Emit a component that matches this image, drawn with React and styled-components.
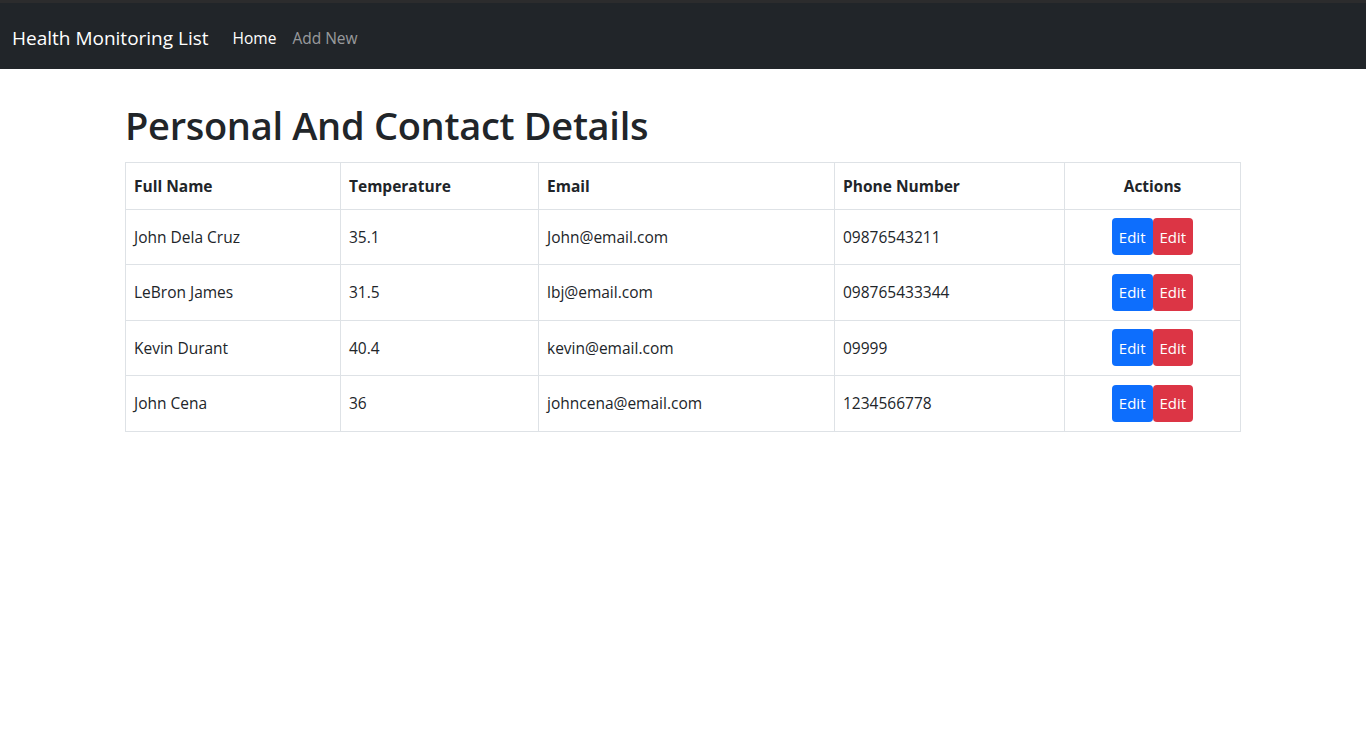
import React from "react";
import styled, { createGlobalStyle } from "styled-components";

const GlobalStyle = createGlobalStyle`
  body {
    margin: 0;
    font-family: "Open Sans", "Noto Sans", sans-serif;
    color: #212529;
    background: #fff;
  }
`;

const TopStrip = styled.div`
  height: 3px;
  background: #2c2c2d;
`;

const Navbar = styled.nav`
  height: 66px;
  background: #212529;
  display: flex;
  align-items: center;
  padding: 3px 12px 0;
  box-sizing: border-box;
`;

const Brand = styled.a`
  color: #fff;
  font-size: 19px;
  margin-right: 16px;
  text-decoration: none;
`;

const NavLink = styled.a`
  color: ${(p) => (p.active ? "#fff" : "rgba(255,255,255,.55)")};
  font-size: 15.5px;
  padding: 0 8px;
  text-decoration: none;
`;

const Container = styled.main`
  max-width: 1116px;
  margin: 0 auto;
  padding-top: 33px;
`;

const Title = styled.h1`
  font-size: 38px;
  font-weight: 600;
  line-height: 1.25;
  letter-spacing: -0.3px;
  margin: 0 0 12px;
`;

const Table = styled.table`
  width: 100%;
  border-collapse: collapse;
  font-size: 15.5px;

  th,
  td {
    border: 1px solid #dee2e6;
    padding: 0 8px;
    text-align: left;
    vertical-align: middle;
  }

  th {
    height: 46px;
    font-weight: 700;
    font-size: 15.5px;
  }

  td {
    height: 54.5px;
  }

  .center {
    text-align: center;
  }
`;

const Btn = styled.button`
  height: 37px;
  padding: 0 7px;
  border: none;
  border-radius: 4px;
  color: #fff;
  font-family: inherit;
  font-size: 15px;
  background: ${(p) => (p.danger ? "#dc3545" : "#0d6efd")};
  vertical-align: middle;
`;

const people = [
  ["John Dela Cruz", "35.1", "John@email.com", "09876543211"],
  ["LeBron James", "31.5", "lbj@email.com", "098765433344"],
  ["Kevin Durant", "40.4", "kevin@email.com", "09999"],
  ["John Cena", "36", "johncena@email.com", "1234566778"],
];

const widths = [215, 198, 296, 230, 176];

export default function App() {
  return (
    <>
      <GlobalStyle />
      <TopStrip />
      <Navbar>
        <Brand href="#">Health Monitoring List</Brand>
        <NavLink href="#" active>
          Home
        </NavLink>
        <NavLink href="#">Add New</NavLink>
      </Navbar>
      <Container>
        <Title>Personal And Contact Details</Title>
        <Table>
          <colgroup>
            {widths.map((w, i) => (
              <col key={i} style={{ width: w }} />
            ))}
          </colgroup>
          <thead>
            <tr>
              <th>Full Name</th>
              <th>Temperature</th>
              <th>Email</th>
              <th>Phone Number</th>
              <th className="center">Actions</th>
            </tr>
          </thead>
          <tbody>
            {people.map((p) => (
              <tr key={p[2]}>
                <td>{p[0]}</td>
                <td>{p[1]}</td>
                <td>{p[2]}</td>
                <td>{p[3]}</td>
                <td className="center">
                  <Btn>Edit</Btn>
                  <Btn danger>Edit</Btn>
                </td>
              </tr>
            ))}
          </tbody>
        </Table>
      </Container>
    </>
  );
}
